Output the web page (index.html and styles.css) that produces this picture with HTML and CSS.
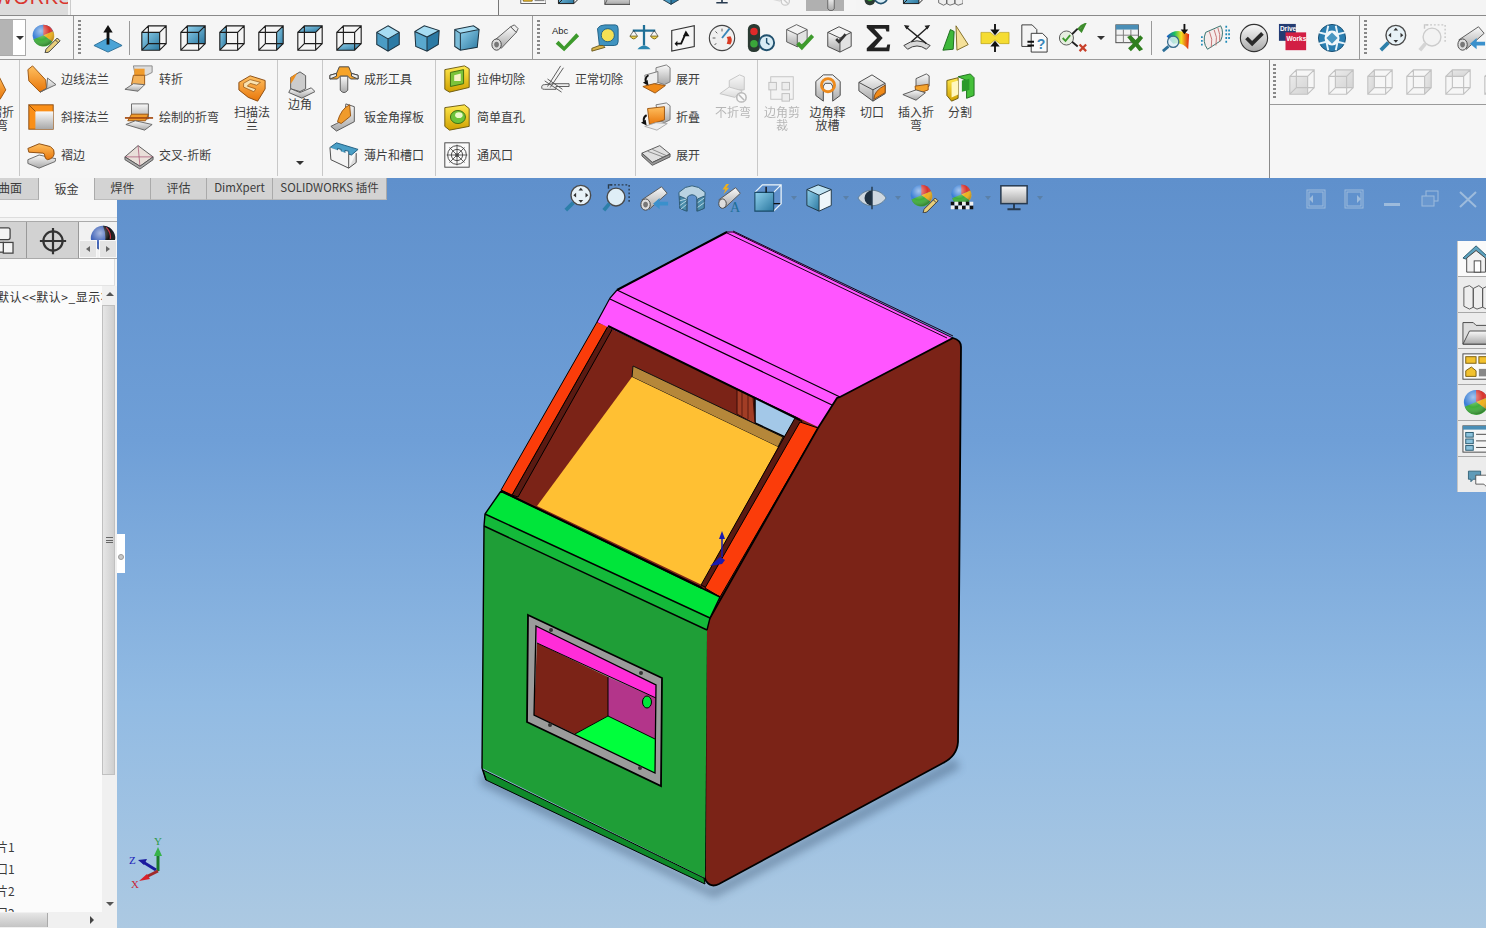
FILE: index.html
```html
<!DOCTYPE html>
<html lang="zh-CN">
<head>
<meta charset="utf-8">
<title>SOLIDWORKS</title>
<link rel="stylesheet" href="styles.css">
</head>
<body>
<svg class="defs" aria-hidden="true">
<defs>
<linearGradient id="gBlue" x1="0" y1="0" x2="1" y2="1"><stop offset="0" stop-color="#8fd0ec"/><stop offset="1" stop-color="#2a779f"/></linearGradient>
<linearGradient id="gOrange" x1="0" y1="0" x2="0" y2="1"><stop offset="0" stop-color="#ffc060"/><stop offset="1" stop-color="#e8760a"/></linearGradient>
<linearGradient id="gGray" x1="0" y1="0" x2="0" y2="1"><stop offset="0" stop-color="#fafafa"/><stop offset="1" stop-color="#a8a8a8"/></linearGradient>
<linearGradient id="gYellow" x1="0" y1="0" x2="0" y2="1"><stop offset="0" stop-color="#ffe84d"/><stop offset="1" stop-color="#cfa000"/></linearGradient>
<linearGradient id="gRain" x1="0" y1="0" x2="1" y2="0"><stop offset="0" stop-color="#1a4fd0"/><stop offset=".35" stop-color="#19c060"/><stop offset=".65" stop-color="#f4e020"/><stop offset="1" stop-color="#e02010"/></linearGradient>
<radialGradient id="gShine" cx=".38" cy=".3" r=".75"><stop offset="0" stop-color="#fff" stop-opacity=".55"/><stop offset=".55" stop-color="#fff" stop-opacity="0"/><stop offset="1" stop-color="#000" stop-opacity=".35"/></radialGradient>
<linearGradient id="gBg" x1="0" y1="0" x2="0" y2="1"><stop offset="0" stop-color="#5f90cc"/><stop offset=".35" stop-color="#6f9fd7"/><stop offset=".7" stop-color="#92bbe3"/><stop offset="1" stop-color="#acc9e2"/></linearGradient>
<filter id="blur" x="-20%" y="-20%" width="140%" height="140%"><feGaussianBlur stdDeviation="4"/></filter>

<symbol id="wire" viewBox="0 0 32 32"><path d="M3 10h19v19H3zM10 3h19v19H10zM3 10l7-7M22 10l7-7M22 29l7-7M3 29l7-7" fill="none" stroke="#1c1c1c" stroke-width="1.2"/></symbol>
<symbol id="c-front" viewBox="0 0 32 32"><rect x="3" y="10" width="19" height="19" fill="url(#gBlue)"/><use href="#wire"/></symbol>
<symbol id="c-back" viewBox="0 0 32 32"><rect x="10" y="3" width="19" height="19" fill="url(#gBlue)"/><use href="#wire"/></symbol>
<symbol id="c-left" viewBox="0 0 32 32"><path d="M3 10l7-7v19l-7 7z" fill="url(#gBlue)"/><use href="#wire"/></symbol>
<symbol id="c-right" viewBox="0 0 32 32"><path d="M22 10l7-7v19l-7 7z" fill="url(#gBlue)"/><use href="#wire"/></symbol>
<symbol id="c-top" viewBox="0 0 32 32"><path d="M3 10l7-7h19l-7 7z" fill="url(#gBlue)"/><use href="#wire"/></symbol>
<symbol id="c-bottom" viewBox="0 0 32 32"><path d="M3 29l7-7h19l-7 7z" fill="url(#gBlue)"/><use href="#wire"/></symbol>
<symbol id="c-iso" viewBox="0 0 32 32"><path d="M16 3l12 7-12 7-12-7z" fill="#a6dcf2"/><path d="M4 10l12 7v13L4 23z" fill="#4b9cc4"/><path d="M28 10L16 17v13l12-7z" fill="#2c7aa4"/><path d="M16 3l12 7v13l-12 7-12-7V10zM4 10l12 7 12-7M16 17v13" fill="none" stroke="#1d3340" stroke-width="1.1"/></symbol>
<symbol id="c-dim" viewBox="0 0 32 32"><path d="M13 3l16 5-13 7L3 9z" fill="#a6dcf2"/><path d="M3 9l13 6v15L4 25z" fill="#5aa8cd"/><path d="M29 8L16 15v15l12-7z" fill="#2c7aa4"/><path d="M13 3l16 5-1 15-12 7-12-5-1-16zM3 9l13 6 13-7M16 15v15" fill="none" stroke="#1d3340" stroke-width="1.1"/></symbol>
<symbol id="c-tri" viewBox="0 0 32 32"><path d="M4 7l20-4 6 4-20 4z" fill="#a6dcf2"/><path d="M4 7l6 4v18l-6-4z" fill="#7bbcd8"/><path d="M10 11l20-4-2 19-18 3z" fill="url(#gBlue)"/><path d="M4 7l20-4 6 4-2 19-18 3-6-4zM4 7l6 4 20-4M10 11v18" fill="none" stroke="#1d3340" stroke-width="1.1"/></symbol>

<symbol id="ball" viewBox="0 0 32 32"><circle cx="15" cy="15" r="13" fill="#3a7fd6"/><path d="M15 15V2a13 13 0 0 1 12 8z" fill="#d8342c"/><path d="M15 15l12-5a13 13 0 0 1-1 13z" fill="#f0b01a"/><path d="M15 15l11 8a13 13 0 0 1-23-3z" fill="#3fae3a"/><circle cx="15" cy="15" r="13" fill="url(#gShine)"/></symbol>
<symbol id="ball-dark" viewBox="0 0 32 32"><circle cx="16" cy="16" r="15" fill="#3f62b8"/><path d="M16 1a15 15 0 0 1 0 30q6-15 0-30z" fill="#111"/><path d="M20 3q6 6 5 14" fill="none" stroke="#c8283a" stroke-width="1.500"/><circle cx="16" cy="16" r="15" fill="url(#gShine)"/></symbol>
<symbol id="ball-pen" viewBox="0 0 32 32"><use href="#ball" width="28" height="28"/><path d="M28 16l3 3-12 12-4 1 1-4z" fill="#e9cf7a" stroke="#3b3b3b"/><path d="M26 18l3 3" stroke="#3b3b3b"/></symbol>
<symbol id="ball-check" viewBox="0 0 32 32"><use href="#ball" x="3" width="26" height="26"/><g fill="#111"><rect x="4" y="20" width="4" height="4"/><rect x="12" y="20" width="4" height="4"/><rect x="20" y="20" width="4" height="4"/><rect x="8" y="24" width="4" height="4"/><rect x="16" y="24" width="4" height="4"/><rect x="24" y="24" width="4" height="4"/></g><rect x="4" y="24" width="4" height="4" fill="#eee"/><rect x="12" y="24" width="4" height="4" fill="#eee"/><rect x="20" y="24" width="4" height="4" fill="#eee"/><rect x="8" y="20" width="4" height="4" fill="#eee"/><rect x="16" y="20" width="4" height="4" fill="#eee"/><rect x="24" y="20" width="4" height="4" fill="#eee"/></symbol>
<symbol id="normal" viewBox="0 0 32 32"><path d="M1 24l15-8 15 8-15 7z" fill="#4aa3d6" stroke="#2d6f97"/><path d="M16 23V8" stroke="#111" stroke-width="3"/><path d="M16 2l5 8H11z" fill="#111"/></symbol>
<symbol id="abc" viewBox="0 0 32 32"><text x="1" y="12" class="svg-abc">Abc</text><path d="M8 19l6 6L27 11l3 3-16 16-9-8z" fill="#3d9a2c"/></symbol>
<symbol id="tape" viewBox="0 0 32 32"><path d="M8 6q2-4 8-4h11q3 0 3 4v14q0 4-4 4H10z" fill="#3f93c0" stroke="#1f5f83"/><circle cx="19" cy="13" r="7" fill="#f4e055" stroke="#1f5f83"/><path d="M10 24l-8 3v3l14-4-2-2z" fill="#d9b44a" stroke="#6b5a1f"/></symbol>
<symbol id="scale" viewBox="0 0 32 32"><path d="M16 2v22M4 8h24" stroke="#1f6f96" stroke-width="2.4"/><path d="M9 28q7-8 14 0z" fill="#2a86b0"/><path d="M1 14q4 6 8 0z" fill="#f1d24a" stroke="#7a6a1c"/><path d="M23 14q4 6 8 0z" fill="#f1d24a" stroke="#7a6a1c"/><path d="M5 8l-4 6M5 8l4 6M27 8l-4 6M27 8l4 6" stroke="#333" stroke-width=".7"/></symbol>
<symbol id="sk-arrow" viewBox="0 0 32 32"><path d="M4 8l24-5v22L4 30z" fill="#f5f5f5" stroke="#333" stroke-width="1.2"/><path d="M9 22h5l4-9" fill="none" stroke="#111" stroke-width="2"/><path d="M19 8l4 6-7 0z" fill="#111"/><path d="M10 19l-3 3 3 3z" fill="#111"/></symbol>
<symbol id="gauge" viewBox="0 0 32 32"><circle cx="16" cy="16" r="13.5" fill="#f0f0f0" stroke="#444" stroke-width="1.2"/><path d="M16 16l8-10" stroke="#3a86b8" stroke-width="2"/><path d="M25 14q3 4 0 9l-4-1q2-4 0-7z" fill="#d83a22"/><path d="M6 16h3M16 6v3M9 9l2 2M8 23l2-1" stroke="#555"/></symbol>
<symbol id="traffic" viewBox="0 0 32 32"><rect x="2" y="1" width="13" height="30" rx="6" fill="#2a3a32"/><circle cx="8.500" cy="9" r="4" fill="#e02a2a"/><circle cx="8.500" cy="22" r="4" fill="#3aa63a"/><circle cx="22" cy="21" r="8" fill="#d8ecf5" stroke="#21516e" stroke-width="2"/><path d="M22 16v5l3 2" fill="none" stroke="#21516e" stroke-width="1.5"/></symbol>
<symbol id="c-gray" viewBox="0 0 32 32"><path d="M14 2l13 6-12 6L2 8z" fill="#f4f4f4"/><path d="M2 8l13 6v15L2 23z" fill="url(#gGray)"/><path d="M27 8l-12 6v15l12-6z" fill="#e2e2e2"/><path d="M14 2l13 6v15l-12 6-13-6V8zM2 8l13 6 12-6M15 14v15" fill="none" stroke="#444" stroke-width="1"/></symbol>
<symbol id="cube-ok" viewBox="0 0 32 32"><use href="#c-gray" width="28" height="28"/><path d="M12 23l6 6 13-14-3-3-10 11-3-3z" fill="#3d9a2c"/></symbol>
<symbol id="cube-dark" viewBox="0 0 32 32"><use href="#c-gray" x="2" y="2"/><path d="M12 18l4 4 8-9-2-2-6 7-2-2z" fill="#333"/></symbol>
<symbol id="sigma" viewBox="0 0 32 32"><path d="M4 2h24v7h-3l-1-3H12l9 10-9 10h13l1-3h3l-1 7H4v-3l11-11L4 5z" fill="#222"/></symbol>
<symbol id="curves" viewBox="0 0 32 32"><path d="M2 24q14-10 28 0l-4 4q-10-7-20 0z" fill="#d8d8d8" stroke="#333"/><path d="M4 4l22 18M28 4L10 20" stroke="#222" stroke-width="1.6"/><path d="M2 2l6 1-3 4zM30 2l-6 1 3 4z" fill="#222"/></symbol>
<symbol id="mirror" viewBox="0 0 32 32"><path d="M2 29l8-22 4 2-1 19z" fill="#3eb83a" stroke="#1b6a1b"/><path d="M16 3l13 20-12 6z" fill="#f5e19a" stroke="#7d6a22"/></symbol>
<symbol id="interfere" viewBox="0 0 32 32"><path d="M1 10h10l5 4 5-4h10v12H21l-5-4-5 4H1z" fill="#f5dc32" stroke="#a88f00" stroke-width=".6"/><path d="M16 1v10M16 31V21" stroke="#111" stroke-width="2"/><path d="M11 7l5 6 5-6zM11 25l5-6 5 6z" fill="#111"/></symbol>
<symbol id="compare" viewBox="0 0 32 32"><path d="M3 2h11l5 5v18H3z" fill="#f4f4f4" stroke="#333"/><path d="M13 11h12l5 5v15H13z" fill="#fafafa" stroke="#333"/><path d="M9 20h7M9 24h7" stroke="#111" stroke-width="2"/><text x="19" y="28" class="svg-q">?</text></symbol>
<symbol id="checkx" viewBox="0 0 32 32"><circle cx="9" cy="16" r="7.500" fill="#e6eee0" stroke="#555"/><path d="M5 16l3 3 5-6" fill="none" stroke="#3d9a2c" stroke-width="2"/><path d="M15 12l6-6M15 20l6 5" stroke="#222" stroke-width="2"/><path d="M22 6l3-3 4-2-4 8zM24 7l3-3" fill="none" stroke="#3d8c2c" stroke-width="2"/><path d="M23 23l7 7M30 23l-7 7" stroke="#c8402a" stroke-width="2.400"/></symbol>
<symbol id="table-x" viewBox="0 0 32 32"><rect x="2" y="2" width="24" height="19" fill="#f2f2f2" stroke="#444"/><rect x="2" y="2" width="24" height="5" fill="#4a8eb6"/><path d="M2 13h24M10 7v14M18 7v14" stroke="#777"/><path d="M14 15l4-2 5 5 5-5 3 3-5 6 5 6-4 2-4-5-5 5-3-3 5-5z" fill="#2f7f1e"/></symbol>
<symbol id="analyze" viewBox="0 0 32 32"><path d="M6 14q10-10 24-2l-1 16q-6-8-16-6z" fill="url(#gRain)"/><circle cx="13" cy="20" r="6" fill="#dff0f8" fill-opacity=".8" stroke="#3a6c8c" stroke-width="1.400"/><path d="M8 25l-6 5" stroke="#2d6f97" stroke-width="3"/><path d="M25 1v7" stroke="#111" stroke-width="2"/><path d="M21 7h8l-4 5z" fill="#111"/></symbol>
<symbol id="wave" viewBox="0 0 32 32"><path d="M6 10L22 3q4 7 0 16L8 28q-6-8-2-18z" fill="#f5eceb" stroke="#2f6f6a"/><path d="M10 9q4 8 2 17M15 7q4 8 2 17M19 5q3 7 2 15" fill="none" stroke="#c47070"/><path d="M28 3v18M31 7v10M2 14v10" stroke="#1c8ab8" stroke-dasharray="2 2" stroke-width="1.800"/></symbol>
<symbol id="roundcheck" viewBox="0 0 32 32"><circle cx="16" cy="16" r="14.500" fill="url(#gGray)" stroke="#333" stroke-width="1.200"/><path d="M8 16l6 6L25 11" fill="none" stroke="#2a2a2a" stroke-width="4"/></symbol>
<symbol id="drive" viewBox="0 0 32 32"><rect x="1" y="1" width="18" height="18" fill="#243c72"/><rect x="8" y="10" width="22" height="19" fill="#d21f44"/><text x="2" y="9" class="svg-drive">Drive</text><text x="9" y="19" class="svg-drive">Works</text></symbol>
<symbol id="ring" viewBox="0 0 32 32"><circle cx="16" cy="16" r="14.500" fill="#2b7eb0" stroke="#174d70"/><circle cx="16" cy="16" r="8" fill="#f4f8fa"/><path d="M2 10l8 2 2-9M30 10l-8 2-2-9M2 22l8-2 2 9M30 22l-8-2-2 9" fill="none" stroke="#e8f4fa" stroke-width="2"/><path d="M10 16l6-6 6 6-6 6z" fill="#4a97c2"/></symbol>
<symbol id="zoom-fit" viewBox="0 0 32 32"><circle cx="19" cy="13" r="10.500" fill="#e8f2f7" stroke="#4a4a4a" stroke-width="1.500"/><path d="M11 21L3 29" stroke="#2d7fa9" stroke-width="4"/><path d="M19 5l2.500 3h-5zM19 21l-2.500-3h5zM11 13l3-2.500v5zM27 13l-3 2.500v-5z" fill="#333"/></symbol>
<symbol id="zoom-box" viewBox="0 0 32 32"><circle cx="16" cy="15" r="9.500" fill="#dfeef6" stroke="#4a4a4a" stroke-width="1.500"/><path d="M9 22L3 29" stroke="#2d7fa9" stroke-width="4"/><path d="M10 2h20v20" fill="none" stroke="#2a3a4a" stroke-dasharray="2 2" stroke-width="1.500"/><path d="M8 6V2h4" fill="none" stroke="#2a3a4a" stroke-width="1.500"/></symbol>
<symbol id="scope-plain" viewBox="0 0 32 32"><path d="M3 20L22 4l6 6-16 17z" fill="url(#gGray)" stroke="#555"/><path d="M22 4l4-2 4 4-2 4z" fill="#eee" stroke="#555"/><ellipse cx="7" cy="23" rx="5" ry="6" fill="#ddd" stroke="#444"/><ellipse cx="7" cy="23" rx="2.500" ry="3" fill="#777"/></symbol>
<symbol id="scope" viewBox="0 0 32 32"><path d="M3 18L24 4l6 7-19 17z" fill="url(#gGray)" stroke="#555"/><ellipse cx="7" cy="23" rx="5" ry="6" fill="#ddd" stroke="#444"/><ellipse cx="7" cy="23" rx="2.500" ry="3" fill="#777"/><path d="M31 20H22v-4l-7 6 7 6v-4h9z" fill="#3a90cc"/></symbol>
<symbol id="section" viewBox="0 0 32 32"><path d="M2 10q14-14 28 0l-1 17-8 3V15q-5-5-10 0v15l-8-3z" fill="#b9d3e2" stroke="#2c5a75"/><path d="M3 14l7 3v13l-7-3zM22 17l7-3v13l-7 3z" fill="#4a8dab" stroke="#2c5a75"/><path d="M3 19l7-2M3 24l7-5M4 28l6-5M22 21l7-5M22 26l7-5" stroke="#d8ecf5" stroke-width=".8"/></symbol>
<symbol id="scope-a" viewBox="0 0 32 32"><path d="M4 18L22 5l5 6-16 15z" fill="url(#gGray)" stroke="#555"/><ellipse cx="8" cy="22" rx="4" ry="5" fill="#ddd" stroke="#444"/><path d="M12 1l-4 6h3l-2 5 6-7h-3l3-4z" fill="#f0b01a"/><text x="16" y="31" class="svg-a">A</text></symbol>
<symbol id="view-orient" viewBox="0 0 32 32"><path d="M2 10h20v20H2z" fill="url(#gBlue)"/><path d="M2 10l8-8h20v20l-8 8M22 10l8-8" fill="none" stroke="#eef6fa" stroke-width="1.300"/><path d="M2 10h20v20H2z" fill="none" stroke="#194a68" stroke-width="1.200"/><path d="M14 4v6M22 22h7" stroke="#111" stroke-width="1.500"/></symbol>
<symbol id="display-cube" viewBox="0 0 32 32"><path d="M14 2l14 5-13 6L2 7z" fill="#bfe3f3"/><path d="M2 7l13 6v17L2 24z" fill="url(#gBlue)"/><path d="M28 7l-13 6v17l13-6z" fill="#eef6fa"/><path d="M14 2l14 5v17l-13 6-13-6V7zM2 7l13 6 13-6M15 13v17" fill="none" stroke="#1d3340"/></symbol>
<symbol id="eye" viewBox="0 0 32 32"><path d="M1 16C8 5 24 5 31 16 24 27 8 27 1 16z" fill="#cfd8e0" stroke="#5f7d94"/><path d="M16 8a8 8 0 0 0 0 16z" fill="#1e3040"/><path d="M16 4v24" stroke="#23384a" stroke-width="1.500"/></symbol>
<symbol id="monitor" viewBox="0 0 32 32"><rect x="2" y="3" width="28" height="19" fill="url(#gGray)" stroke="#273a4f" stroke-width="1.600"/><path d="M16 22v5M9 28h14" stroke="#273a4f" stroke-width="2"/></symbol>
<symbol id="triad-pin" viewBox="0 0 32 32"><circle cx="16" cy="16" r="11" fill="none" stroke="#333" stroke-width="2.500"/><path d="M16 1v30M1 16h30" stroke="#333" stroke-width="2.500"/></symbol>
<symbol id="t-config" viewBox="0 0 27 37"><rect x="-8" y="6" width="18" height="12" rx="2" fill="#f4f4f4" stroke="#444" stroke-width="1.300"/><rect x="3" y="21" width="10" height="11" fill="#f4f4f4" stroke="#444" stroke-width="1.300"/><rect x="-6" y="21" width="9" height="10" fill="#f4f4f4" stroke="#444" stroke-width="1.300"/></symbol>

<symbol id="r-first" viewBox="0 0 32 32"><path d="M-4 12L12 2l8 16-6 10-14 0z" fill="url(#gOrange)" stroke="#9a5410"/></symbol>
<symbol id="r-edge" viewBox="0 0 32 32"><path d="M2 6l5-4 14 15 1 9-7 4L3 18z" fill="url(#gOrange)" stroke="#9a5410"/><path d="M15 30l17-8-9-7-1 11z" fill="url(#gGray)" stroke="#666"/></symbol>
<symbol id="r-jog" viewBox="0 0 32 32"><path d="M10 2h20v7l-6 3H12z" fill="#ddd" stroke="#888"/><path d="M11 5h11v7H11z" fill="#f09b2c"/><path d="M10 12h12v10H8z" fill="#f4b25a" stroke="#9a5410"/><path d="M1 27l9-6 12 1-7 7z" fill="url(#gGray)" stroke="#666"/></symbol>
<symbol id="r-swept" viewBox="0 0 32 32"><path d="M2 10L14 3l16 5v9l-8 13-10-4-10-8z" fill="url(#gOrange)" stroke="#8a4b10"/><path d="M7 11l7-4 11 3-4 3-7-2-3 3 9 3-2 3-11-5z" fill="#f9e2b0" stroke="#8a4b10" stroke-width=".7"/></symbol>
<symbol id="r-corner" viewBox="0 0 32 32"><path d="M6 8l10-6 6 4v14l-6 3-10-3z" fill="#ccc" stroke="#555"/><path d="M6 15V8l7-5q-2 5-7 12z" fill="#ee8f1e"/><path d="M6 20l10 4 12-5 4 4-14 7L4 24z" fill="url(#gGray)" stroke="#555"/></symbol>
<symbol id="r-form" viewBox="0 0 32 32"><path d="M1 12l7-2 3-7h10l3 7 7 2v4h-8l-3-3h-8l-3 3H1z" fill="#f6a429" stroke="#444"/><path d="M1 12l7-2v3l-7 3zM31 12l-7-2v3l7 3z" fill="#eee" stroke="#444"/><path d="M12 13h8v15q-4 5-8 0z" fill="url(#gGray)" stroke="#555"/></symbol>
<symbol id="r-miter" viewBox="0 0 32 32"><rect x="3" y="3" width="26" height="26" fill="#fa8f18" stroke="#8a4b10"/><path d="M10 10h19v19H10z" fill="url(#gGray)"/><path d="M3 3l7 7" stroke="#8a4b10"/></symbol>
<symbol id="r-sketch" viewBox="0 0 32 32"><path d="M8 2h18v16H8z" fill="url(#gGray)" stroke="#666"/><path d="M8 13l18 0-3 7H4z" fill="#f09b2c" stroke="#9a5410"/><path d="M1 17h30" stroke="#a44a10" stroke-width="1.800"/><path d="M2 24l10-4 18 4-8 6z" fill="url(#gGray)" stroke="#666"/></symbol>
<symbol id="r-gusset" viewBox="0 0 32 32"><path d="M18 2l9 3v16L8 31l-6-5 6-3 8-4z" fill="url(#gGray)" stroke="#555"/><path d="M9 21q4-14 13-18l1 12-10 8z" fill="#f09b2c" stroke="#9a5410"/></symbol>
<symbol id="r-hem" viewBox="0 0 32 32"><path d="M2 21l12-5 18 4-1 3-17 7L2 25z" fill="url(#gGray)" stroke="#666"/><path d="M2 9l12-5 12 3q5 3 4 8t-7 6q-3-1-3-4t-2-3L3 13z" fill="url(#gOrange)" stroke="#8a4b10"/></symbol>
<symbol id="r-cross" viewBox="0 0 32 32"><path d="M1 18L15 6l16 12-14 10z" fill="#e9dfd9" stroke="#555"/><path d="M1 18h30M15 6l2 22" stroke="#a57" stroke-width=".8"/><path d="M1 18l16 10 14-10v3L17 31 1 21z" fill="#aaa" stroke="#555"/></symbol>
<symbol id="r-tab" viewBox="0 0 32 32"><path d="M1 8l7-5 23 7-7 6-3-1v-3l-4-1v3l-4-1v-3l-4-1v3z" fill="#4a9fc6" stroke="#1d5d80"/><path d="M1 8l1 13 19 9V15" fill="#f4f4f4" stroke="#444"/><path d="M21 30l8-6V14" fill="#ddd" stroke="#444"/></symbol>
<symbol id="r-cut" viewBox="0 0 32 32"><path d="M3 6l21-4 5 3v20l-21 5-5-3z" fill="url(#gYellow)" stroke="#6c5a10"/><path d="M9 9l14-3v15l-14 3z" fill="#7bc33a" stroke="#3a6c10"/><path d="M13 12l7-2v8h-7z" fill="#f8f2c8"/></symbol>
<symbol id="r-hole" viewBox="0 0 32 32"><path d="M3 6l21-3 5 4v19l-21 4-5-4z" fill="url(#gYellow)" stroke="#6c5a10"/><ellipse cx="17" cy="16" rx="8" ry="7" fill="#6cc33a" stroke="#3a6c10"/><ellipse cx="18" cy="14" rx="4" ry="3" fill="#eaf7c8"/></symbol>
<symbol id="r-vent" viewBox="0 0 32 32"><rect x="3" y="3" width="26" height="26" fill="#fafafa" stroke="#444"/><circle cx="16" cy="16" r="10" fill="none" stroke="#444"/><circle cx="16" cy="16" r="6" fill="none" stroke="#444"/><circle cx="16" cy="16" r="2" fill="#444"/><path d="M16 5v22M5 16h22M8 8l16 16M24 8L8 24" stroke="#444" stroke-width=".9"/></symbol>
<symbol id="r-normal" viewBox="0 0 32 32"><path d="M2 26q-1-4 3-4l10-1 16 0v3l-14 0v3H5q-3 0-3-1z" fill="#eee" stroke="#555"/><path d="M8 24L22 2M11 25L25 4M5 18l18 12M8 16l16 11" stroke="#555" stroke-width="1"/></symbol>
<symbol id="r-unfold" viewBox="0 0 32 32"><path d="M16 4l11-3 4 3v15l-6 3-9-3z" fill="url(#gGray)" stroke="#777"/><path d="M4 12l14-4v12L6 24z" fill="#eee" stroke="#777"/><path d="M2 24l12-3 12 2-11 8z" fill="#f08a18" stroke="#9a5410"/><path d="M8 12q-5 3-2 9" fill="none" stroke="#111" stroke-width="2"/><path d="M2 20l6 3-1-6z" fill="#111"/></symbol>
<symbol id="r-fold" viewBox="0 0 32 32"><path d="M16 3l11-2 4 3v15l-6 3-6-2z" fill="url(#gGray)" stroke="#777"/><path d="M7 7l18-2v14L9 24z" fill="url(#gOrange)" stroke="#9a5410"/><path d="M4 26l12-4 12 1-11 7z" fill="#eee" stroke="#aaa"/><path d="M6 14q-5 3-2 9" fill="none" stroke="#111" stroke-width="2"/><path d="M0 22l6 3-1-6z" fill="#111"/></symbol>
<symbol id="r-flat" viewBox="0 0 32 32"><path d="M1 14l19-8 11 9-19 9z" fill="#e0e0e0" stroke="#555"/><path d="M7 12l19 7M12 10l18 8" stroke="#888"/><path d="M1 14v3l11 10 19-9v-3l-19 9z" fill="#999" stroke="#555"/></symbol>
<symbol id="r-nobend" viewBox="0 0 32 32"><path d="M12 8l11-6 5 2v14l-16 0z" fill="url(#gGray)" stroke="#666"/><path d="M2 22l10-7 14 4-8 7z" fill="url(#gGray)" stroke="#666"/><circle cx="25" cy="26" r="5" fill="#fff" stroke="#444" stroke-width="1.600"/><path d="M22 23l6 6" stroke="#444" stroke-width="1.600"/></symbol>
<symbol id="r-trim" viewBox="0 0 32 32"><rect x="4" y="4" width="24" height="24" fill="#eee" stroke="#666"/><rect x="2" y="10" width="8" height="8" fill="#ddd" stroke="#555"/><rect x="16" y="10" width="8" height="8" fill="#ddd" stroke="#555"/><rect x="16" y="22" width="8" height="8" fill="#ddd" stroke="#555"/></symbol>
<symbol id="r-relief" viewBox="0 0 32 32"><path d="M3 9l8-7h10l8 7v15l-8 6V14l-2-3h-6l-2 3v16l-8-6z" fill="url(#gGray)" stroke="#444"/><circle cx="16" cy="13" r="7" fill="none" stroke="#ed8a1c" stroke-width="3"/></symbol>
<symbol id="r-notch" viewBox="0 0 32 32"><path d="M2 10L16 2l14 9v11l-13 8L2 19z" fill="url(#gGray)" stroke="#444"/><path d="M2 10l15 8 13-7M17 18v12" fill="none" stroke="#444"/><path d="M18 28q0-9 12-15v8z" fill="#f08a18" stroke="#8a4b10"/></symbol>
<symbol id="r-insert" viewBox="0 0 32 32"><path d="M16 6l11-5 3 2v11l-14 6z" fill="url(#gGray)" stroke="#555"/><path d="M15 14l14-2v6l-13 5z" fill="#f4a32c" stroke="#9a5410"/><path d="M2 23l14-5 10 3-10 8z" fill="url(#gGray)" stroke="#555"/></symbol>
<symbol id="r-rip" viewBox="0 0 32 32"><path d="M2 8l12-3v22l-7 3-5-6z" fill="url(#gYellow)" stroke="#6c5a10"/><path d="M14 4l13-3 4 4v19l-8 3V8z" fill="#45c03a" stroke="#1c6d1c"/><path d="M7 10l7-2v15l-7 3z" fill="#fff7bf"/><path d="M18 8l8-2v12l-8 2z" fill="#2a9a2a"/></symbol>

<symbol id="t-home" viewBox="0 0 32 32"><path d="M1 15L15 2l14 13-3 1L15 7 4 16z" fill="#5fa3bf" stroke="#25566c"/><path d="M5 15v15h20V15L15 7z" fill="#f2f2f2" stroke="#444"/><rect x="13" y="18" width="7" height="12" fill="#fff" stroke="#444"/></symbol>
<symbol id="t-books" viewBox="0 0 32 32"><path d="M2 8l6-2 4 3v20l-4 2-6-3zM12 9l6-3 4 3v20l-6 2-4-2zM22 9l6-3 4 3v20l-6 2-4-2z" fill="#eee" stroke="#555"/></symbol>
<symbol id="t-folder" viewBox="0 0 32 32"><path d="M1 7h11l3 3h17v20H1z" fill="#ddd" stroke="#444"/><path d="M1 30l7-14h24v14z" fill="url(#gGray)" stroke="#444"/></symbol>
<symbol id="t-parts" viewBox="0 0 32 32"><rect x="1" y="2" width="31" height="27" fill="#fafafa" stroke="#444"/><rect x="4" y="5" width="11" height="7" fill="#f2c12e" stroke="#7a5e10"/><rect x="18" y="5" width="11" height="7" fill="#f2c12e" stroke="#7a5e10"/><path d="M4 26v-6l6-4 5 4v6z" fill="#f2c12e" stroke="#7a5e10"/><rect x="18" y="18" width="12" height="8" fill="#888"/></symbol>
<symbol id="t-list" viewBox="0 0 32 32"><rect x="1" y="2" width="31" height="28" fill="#f6f6f6" stroke="#444"/><rect x="1" y="2" width="31" height="4" fill="#4a8eb6"/><rect x="4" y="9" width="8" height="5" fill="#8bc2dc" stroke="#25566c"/><rect x="4" y="16" width="8" height="5" fill="#8bc2dc" stroke="#25566c"/><rect x="4" y="23" width="8" height="5" fill="#8bc2dc" stroke="#25566c"/><path d="M15 11h17M15 18h17M15 25h17" stroke="#444"/></symbol>
<symbol id="t-chat" viewBox="0 0 32 32"><path d="M3 10h15v10h-9l-3 3v-3H3z" fill="#5f9bb8" stroke="#25566c"/><path d="M12 15h18v11h-4v4l-4-4H12z" fill="#fafafa" stroke="#444"/></symbol>
</defs>
</svg>

<div class="app">
  <header class="top-strip">
    <div class="logo-box"><span class="logo-text">WORKS</span></div>
    <div class="title-field"></div>
    <div class="top-peek">
      <svg class="peek"><use href="#t-parts"/></svg>
      <svg class="peek pg10"><use href="#c-front"/></svg>
      <svg class="peek pg22"><use href="#t-folder"/></svg>
      <svg class="peek pg28"><use href="#c-iso"/></svg>
      <svg class="peek pg25"><use href="#monitor"/></svg>
      <svg class="peek pg30 ghost"><use href="#r-nobend"/></svg>
      <span class="peek-active pg15"><svg class="peek peek-in"><use href="#r-form"/></svg></span>
      <svg class="peek pg7"><use href="#traffic"/></svg>
      <svg class="peek pg12"><use href="#c-front"/></svg>
      <svg class="peek pg10"><use href="#t-books"/></svg>
    </div>
  </header>

  <div class="toolbar">
    <div class="combo"><span class="combo-fill"></span><span class="caret"></span></div>
    <div class="tool"><svg class="ico"><use href="#ball-pen"/></svg></div>
    <span class="sep-full m-l8"></span>
    <span class="grip g-a"></span>
    <div class="tool"><svg class="ico"><use href="#normal"/></svg></div>
    <span class="sep-thin m-l2 m-r4"></span>
    <div class="tool"><svg class="ico"><use href="#c-front"/></svg></div>
    <div class="tool"><svg class="ico"><use href="#c-back"/></svg></div>
    <div class="tool"><svg class="ico"><use href="#c-left"/></svg></div>
    <div class="tool"><svg class="ico"><use href="#c-right"/></svg></div>
    <div class="tool"><svg class="ico"><use href="#c-top"/></svg></div>
    <div class="tool"><svg class="ico"><use href="#c-bottom"/></svg></div>
    <div class="tool"><svg class="ico"><use href="#c-iso"/></svg></div>
    <div class="tool"><svg class="ico"><use href="#c-dim"/></svg></div>
    <div class="tool"><svg class="ico"><use href="#c-tri"/></svg></div>
    <div class="tool"><svg class="ico"><use href="#scope-plain"/></svg></div>
    <span class="sep-full m-l8"></span>
    <span class="grip g-b"></span>
    <div class="tool"><svg class="ico"><use href="#abc"/></svg></div>
    <div class="tool"><svg class="ico"><use href="#tape"/></svg></div>
    <div class="tool"><svg class="ico"><use href="#scale"/></svg></div>
    <div class="tool"><svg class="ico"><use href="#sk-arrow"/></svg></div>
    <div class="tool"><svg class="ico"><use href="#gauge"/></svg></div>
    <div class="tool"><svg class="ico"><use href="#traffic"/></svg></div>
    <div class="tool"><svg class="ico"><use href="#cube-ok"/></svg></div>
    <div class="tool"><svg class="ico"><use href="#cube-dark"/></svg></div>
    <div class="tool"><svg class="ico"><use href="#sigma"/></svg></div>
    <div class="tool"><svg class="ico"><use href="#curves"/></svg></div>
    <div class="tool"><svg class="ico"><use href="#mirror"/></svg></div>
    <div class="tool"><svg class="ico"><use href="#interfere"/></svg></div>
    <div class="tool"><svg class="ico"><use href="#compare"/></svg></div>
    <div class="tool"><svg class="ico"><use href="#checkx"/></svg></div>
    <div class="caret-cell"><span class="caret"></span></div>
    <div class="tool"><svg class="ico"><use href="#table-x"/></svg></div>
    <span class="sep-thin m-l3 m-r4"></span>
    <div class="tool"><svg class="ico"><use href="#analyze"/></svg></div>
    <div class="tool"><svg class="ico"><use href="#wave"/></svg></div>
    <div class="tool"><svg class="ico"><use href="#roundcheck"/></svg></div>
    <div class="tool"><svg class="ico"><use href="#drive"/></svg></div>
    <div class="tool"><svg class="ico"><use href="#ring"/></svg></div>
    <span class="sep-full m-l8"></span>
    <span class="grip g-b"></span>
    <div class="tool"><svg class="ico"><use href="#zoom-fit"/></svg></div>
    <div class="tool ghost"><svg class="ico"><use href="#zoom-box"/></svg></div>
    <div class="tool"><svg class="ico"><use href="#scope"/></svg></div>
  </div>

  <div class="ribbon">
    <section class="grp grp-a">
      <div class="big cut-left"><svg class="ico"><use href="#r-first"/></svg><span>褶折弯</span></div>
    </section>
    <section class="grp grp-b">
      <div class="col c98">
        <div class="item"><svg class="ico"><use href="#r-edge"/></svg><span>边线法兰</span></div>
        <div class="item"><svg class="ico"><use href="#r-miter"/></svg><span>斜接法兰</span></div>
        <div class="item"><svg class="ico"><use href="#r-hem"/></svg><span>褶边</span></div>
      </div>
      <div class="col c105">
        <div class="item"><svg class="ico"><use href="#r-jog"/></svg><span>转折</span></div>
        <div class="item"><svg class="ico"><use href="#r-sketch"/></svg><span>绘制的折弯</span></div>
        <div class="item"><svg class="ico"><use href="#r-cross"/></svg><span>交叉-折断</span></div>
      </div>
      <div class="big w46"><svg class="ico"><use href="#r-swept"/></svg><span>扫描法兰</span></div>
    </section>
    <section class="grp grp-c">
      <svg class="ico"><use href="#r-corner"/></svg>
      <span class="corner-label">边角</span>
      <span class="caret corner-caret"></span>
    </section>
    <section class="grp grp-d">
      <div class="col">
        <div class="item"><svg class="ico"><use href="#r-form"/></svg><span>成形工具</span></div>
        <div class="item"><svg class="ico"><use href="#r-gusset"/></svg><span>钣金角撑板</span></div>
        <div class="item"><svg class="ico"><use href="#r-tab"/></svg><span>薄片和槽口</span></div>
      </div>
    </section>
    <section class="grp grp-e">
      <div class="col c98">
        <div class="item"><svg class="ico"><use href="#r-cut"/></svg><span>拉伸切除</span></div>
        <div class="item"><svg class="ico"><use href="#r-hole"/></svg><span>简单直孔</span></div>
        <div class="item"><svg class="ico"><use href="#r-vent"/></svg><span>通风口</span></div>
      </div>
      <div class="col">
        <div class="item"><svg class="ico"><use href="#r-normal"/></svg><span>正常切除</span></div>
      </div>
    </section>
    <section class="grp grp-f">
      <div class="col c69">
        <div class="item"><svg class="ico"><use href="#r-unfold"/></svg><span>展开</span></div>
        <div class="item"><svg class="ico"><use href="#r-fold"/></svg><span>折叠</span></div>
        <div class="item"><svg class="ico"><use href="#r-flat"/></svg><span>展开</span></div>
      </div>
      <div class="big w46 disabled"><svg class="ico"><use href="#r-nobend"/></svg><span>不折弯</span></div>
    </section>
    <section class="grp grp-g">
      <div class="big w46 disabled"><svg class="ico"><use href="#r-trim"/></svg><span>边角剪裁</span></div>
      <div class="big w45"><svg class="ico"><use href="#r-relief"/></svg><span>边角释放槽</span></div>
      <div class="big w44"><svg class="ico"><use href="#r-notch"/></svg><span>切口</span></div>
      <div class="big w44"><svg class="ico"><use href="#r-insert"/></svg><span>插入折弯</span></div>
      <div class="big w44"><svg class="ico"><use href="#r-rip"/></svg><span>分割</span></div>
    </section>
    <section class="grp-h">
      <div class="ghost-row">
        <span class="grip g-c"></span>
        <div class="tool ghost"><svg class="ico"><use href="#c-front"/></svg></div>
        <div class="tool ghost"><svg class="ico"><use href="#c-back"/></svg></div>
        <div class="tool ghost"><svg class="ico"><use href="#c-left"/></svg></div>
        <div class="tool ghost"><svg class="ico"><use href="#c-right"/></svg></div>
        <div class="tool ghost"><svg class="ico"><use href="#c-top"/></svg></div>
        <div class="tool ghost"><svg class="ico"><use href="#c-bottom"/></svg></div>
      </div>
    </section>
  </div>

  <main class="stage">
    <svg class="canvas" viewBox="0 178 1486 750" preserveAspectRatio="none">
      <rect x="0" y="178" width="1486" height="750" fill="url(#gBg)"/>
      <polygon points="482,772 712,888 955,758 960,768 714,898 480,784" fill="#2d4560" opacity=".38" filter="url(#blur)"/>
      <!-- cabinet interior -->
      <polygon points="597,322 822,428 720,600 501,491" fill="#7b2317"/>
      <polygon points="755,397 797,417 785,437 755,423" fill="#a3c8e8" stroke="#000" stroke-width="1.500"/>
      <polygon points="737,388 753,397 755,424 737,414" fill="#a23d25" stroke="#3a0d08"/>
      <path d="M742 391v25M748 394v25" stroke="#5c1a10" stroke-width="1"/>
      <polygon points="633,366 783,437 778,447 632,377" fill="#b5873a" stroke="#111"/>
      <polygon points="632,377 778,447 702,585 537,506" fill="#ffc033"/>
      <polygon points="608,326 613,328 518,497 512,495" fill="#5a1a12" stroke="#000"/>
      <polygon points="795,418 802,421 707,588 701,585" fill="#5a1a12" stroke="#000"/>
      <polygon points="597,322 608,326 512,495 501,490" fill="#fb3c0a" stroke="#000"/>
      <polygon points="800,422 818,428 720,597 705,588" fill="#fb3c0a" stroke="#000"/>
      <!-- top panels -->
      <polygon points="727,232 733,231 953,338 840,397 617,290" fill="#ff55ff"/>
      <polygon points="617,290 840,397 832,404 822,426 818,427 597,322 610,298" fill="#ff55ff"/>
      <path d="M617 290L727 232h6L953 338M727 233L947 338M733 231L953 336" fill="none" stroke="#1a001a" stroke-width="1"/>
      <path d="M727 232L617 290" fill="none" stroke="#000" stroke-width="2"/>
      <path d="M617 290L840 397M610 299L832 405" fill="none" stroke="#000" stroke-width="1.200"/>
      <path d="M617 290L610 298L597 322" fill="none" stroke="#000" stroke-width="1.200"/>
      <path d="M608 326L800 420" fill="none" stroke="#000" stroke-width="2"/>
      <!-- brown side -->
      <path d="M953 338Q961 340 961 347L958 742Q957 756 943 763L719 884Q711 888 706 881Q704 878 705 870L706 630Q707 622 710 618L818 428L837 398L840 397Z" fill="#7b2317" stroke="#000" stroke-width="1.800"/>
      <!-- green front -->
      <polygon points="484,526 707,630 705,878 482,768" fill="#1f9e37"/>
      <polygon points="483,770 704,878 705,884 486,780" fill="#0f8a2a" stroke="#000" stroke-width="1"/>
      <polygon points="485,514 710,618 707,630 484,526" fill="#14b93a"/>
      <polygon points="501,491 720,597 710,618 485,514" fill="#00e53a"/>
      <path d="M501 491L720 597M501 491L485 514L484 526L482 768L486 780M485 514L710 618M484 526L707 630M720 597L710 618L707 630" fill="none" stroke="#000" stroke-width="1.400"/>
      <path d="M501 491L702 588" stroke="#000" stroke-width="2" fill="none"/>
      <!-- front window -->
      <polygon points="528,615 662,678 661,786 527,722" fill="#9b9b9b" stroke="#000" stroke-width="1.800"/>
      <polygon points="537,643 608,677 608,716 575,734 534,715" fill="#7b2317"/>
      <polygon points="608,677 656,698 655,739 608,716" fill="#b3358a"/>
      <polygon points="608,716 655,739 655,773 575,734" fill="#00ff3c"/>
      <polygon points="536,626 656,685 656,698 537,643" fill="#ff2dd8"/>
      <polygon points="536,626 656,685 655,773 534,715" fill="none" stroke="#000" stroke-width="1.300"/>
      <path d="M537 643L656 698M608 677V716M608 716L575 734M608 716L655 739" fill="none" stroke="#000" stroke-width="1"/>
      <ellipse cx="647" cy="702" rx="4.500" ry="6" fill="#00e53a" stroke="#000"/>
      <circle cx="551" cy="630" r="2" fill="#333"/><circle cx="641" cy="673" r="2" fill="#333"/><circle cx="550" cy="725" r="2" fill="#333"/><circle cx="640" cy="768" r="2" fill="#333"/>
      <!-- origin -->
      <path d="M722 537v20" stroke="#1a1ab0" stroke-width="1.500"/><path d="M722 531l3 8h-6z" fill="#1a1ab0"/><path d="M710 566l10-9 5 3-3 4z" fill="#1a1ab0"/>
      <!-- triad -->
      <path d="M158 871V851" stroke="#1d7a2a" stroke-width="3"/><path d="M158 847l4 9h-8z" fill="#37b34a"/>
      <path d="M156 870L143 862" stroke="#1a1a9e" stroke-width="3"/><path d="M138 860l9-1-3 6z" fill="#1a1a9e"/>
      <path d="M158 871L146 877" stroke="#a02a2a" stroke-width="3"/><path d="M139 881l8-7 3 5z" fill="#d8202a"/>
      <text x="154" y="845" class="axis ax-y">Y</text><text x="129" y="864" class="axis ax-z">Z</text><text x="131" y="888" class="axis ax-x">X</text>
    </svg>

    <nav class="tabs">
      <span class="tab t-first">曲面</span>
      <span class="tab t-active">钣金</span>
      <span class="tab t-56">焊件</span>
      <span class="tab t-56">评估</span>
      <span class="tab t-66">DimXpert</span>
      <span class="tab t-114">SOLIDWORKS 插件</span>
    </nav>

    <div class="hud">
      <svg class="hud-ico"><use href="#zoom-fit"/></svg>
      <svg class="hud-ico"><use href="#zoom-box"/></svg>
      <svg class="hud-ico"><use href="#scope"/></svg>
      <svg class="hud-ico"><use href="#section"/></svg>
      <svg class="hud-ico"><use href="#scope-a"/></svg>
      <svg class="hud-ico"><use href="#view-orient"/></svg>
      <span class="hud-caret"></span>
      <svg class="hud-ico"><use href="#display-cube"/></svg>
      <span class="hud-caret"></span>
      <svg class="hud-ico"><use href="#eye"/></svg>
      <span class="hud-caret"></span>
      <svg class="hud-ico"><use href="#ball-pen"/></svg>
      <svg class="hud-ico"><use href="#ball-check"/></svg>
      <span class="hud-caret"></span>
      <svg class="hud-ico"><use href="#monitor"/></svg>
      <span class="hud-caret"></span>
    </div>

    <div class="win-ctrl">
      <span class="wc"><svg viewBox="0 0 20 20"><rect x="1" y="1" width="18" height="18" class="wc-line"/><rect x="3" y="3" width="14" height="14" class="wc-line"/><path d="M7 6v8L3 10z" class="wc-fill"/></svg></span>
      <span class="wc"><svg viewBox="0 0 20 20"><rect x="1" y="1" width="18" height="18" class="wc-line"/><rect x="3" y="3" width="14" height="14" class="wc-line"/><path d="M13 6v8l4-4z" class="wc-fill"/></svg></span>
      <span class="wc"><svg viewBox="0 0 20 20"><rect x="2" y="14" width="16" height="3" class="wc-fill"/></svg></span>
      <span class="wc"><svg viewBox="0 0 20 20"><rect x="6" y="2" width="12" height="10" class="wc-line"/><rect x="2" y="7" width="12" height="10" class="wc-fill2"/></svg></span>
      <span class="wc"><svg viewBox="0 0 20 20"><path d="M2 3l16 15M18 3L2 18" class="wc-x"/></svg></span>
    </div>

    <aside class="taskpane">
      <div class="task t-on"><svg><use href="#t-home"/></svg></div>
      <div class="task"><svg><use href="#t-books"/></svg></div>
      <div class="task"><svg><use href="#t-folder"/></svg></div>
      <div class="task"><svg><use href="#t-parts"/></svg></div>
      <div class="task"><svg><use href="#ball"/></svg></div>
      <div class="task"><svg><use href="#t-list"/></svg></div>
      <div class="task"><svg class="chat"><use href="#t-chat"/></svg></div>
    </aside>

    <div class="work">
      <aside class="panel">
        <div class="panel-head"></div>
        <div class="panel-tabs">
          <div class="ptab p1"><svg class="ptab-ico"><use href="#t-config"/></svg></div>
          <div class="ptab p2"><svg class="target"><use href="#triad-pin"/></svg></div>
          <div class="ptab p3"><svg class="ptab-ball"><use href="#ball-dark"/></svg>
            <span class="scroll-btn sb-l"></span><span class="scroll-btn sb-r"></span>
          </div>
        </div>
        <div class="panel-field"></div>
        <div class="tree-wrap">
          <div class="tree">
            <div class="tree-root">默认&lt;&lt;默认&gt;_显示状态</div>
            <ul class="tree-list">
              <li>薄片1</li>
              <li>切口1</li>
              <li>薄片2</li>
              <li>切口2</li>
            </ul>
          </div>
          <div class="vscroll"><span class="v-up"></span><span class="v-thumb"></span><span class="v-down"></span></div>
        </div>
        <div class="hscroll"><span class="h-thumb"></span><span class="h-right"></span></div>
      </aside>
      <div class="splitter"><span class="split-dot"></span></div>
    </div>
  </main>
</div>
</body>
</html>
```
FILE: styles.css
```css
* { box-sizing: border-box; }
html, body { margin: 0; height: 100%; overflow: hidden; }
body { font: 12px/13px "Noto Sans CJK SC", "Noto Sans", sans-serif; color: #3c3c3c; background: #f5f5f5; }
.defs { position: absolute; width: 0; height: 0; }
.app { width: 1486px; height: 928px; display: flex; flex-direction: column; overflow: hidden; }

/* top strip */
.top-strip { height: 16px; flex: none; display: flex; background: #f4f4f4; border-bottom: 1px solid #8a8a8a; overflow: hidden; }
.logo-box { width: 68px; background: #dcdcdc; overflow: hidden; flex: none; }
.logo-text { display: block; margin: -13px 0 0 -6px; font: 20px/20px "Liberation Sans", sans-serif; letter-spacing: .6px; color: #d9352e; }
.title-field { width: 429px; margin-left: 2px; background: #f7f7f7; border-left: 1px solid #ccc; border-right: 1px solid #777; border-bottom: 1px solid #111; height: 16px; flex: none; }
.top-peek { display: flex; align-items: flex-start; margin-left: 21px; }
.peek { width: 26px; height: 26px; margin-top: -20px; flex: none; }
.peek-in { margin-top: -16px; }
.pg7 { margin-left: 7px; }
.pg10 { margin-left: 10px; }
.pg12 { margin-left: 12px; }
.pg15 { margin-left: 15px; }
.pg22 { margin-left: 22px; }
.pg25 { margin-left: 25px; }
.pg28 { margin-left: 28px; }
.pg30 { margin-left: 30px; }
.peek-active { display: block; width: 50px; height: 11px; background: linear-gradient(90deg, #b0b0b0 75%, #f5f5f5 75%); text-align: center; flex: none; overflow: hidden; }

/* toolbar */
.toolbar { height: 44px; flex: none; display: flex; align-items: center; background: #f5f5f5; border-bottom: 1px solid #9a9a9a; overflow: hidden; }
.tool { width: 39px; flex: none; display: flex; justify-content: center; }
.ico { width: 30px; height: 30px; flex: none; display: block; }
.ghost { filter: grayscale(1) opacity(.24); }
.combo { width: 26px; height: 37px; flex: none; display: flex; border: 1px solid #aaa; border-left: 0; background: #fff; align-items: center; }
.combo-fill { width: 13px; height: 100%; background: #b4b4b4; }
.caret { display: block; width: 0; height: 0; border: 4px solid transparent; border-top: 4px solid #333; border-bottom: 0; }
.combo .caret { margin-left: 3px; }
.caret-cell { width: 17px; flex: none; display: flex; justify-content: center; }
.sep-full { width: 1px; align-self: stretch; background: #9a9a9a; flex: none; }
.sep-thin { width: 1px; height: 34px; background: #999; flex: none; }
.m-l8 { margin-left: 8px; }
.m-l2 { margin-left: 2px; }
.m-l3 { margin-left: 3px; }
.m-r4 { margin-right: 4px; }
.grip { width: 3px; height: 36px; flex: none; background: repeating-linear-gradient(#888 0 2px, transparent 2px 4px); }
.g-a { margin: 0 7px 0 4px; }
.g-b { margin: 0 6px 0 4px; }
.g-c { margin: 0 6px 0 3px; }

/* ribbon */
.ribbon { height: 118px; flex: none; display: flex; background: #f6f6f6; overflow: hidden; }
.grp { position: relative; height: 116px; border-right: 1px solid #c8c8c8; display: flex; flex: none; margin-top: 0; }
.grp-a { width: 20px; overflow: hidden; }
.grp-b { width: 258px; padding-left: 6px; }
.grp-c { width: 45px; flex-direction: column; align-items: center; padding-top: 10px; }
.grp-d { width: 113px; padding-left: 6px; }
.grp-e { width: 200px; padding-left: 6px; }
.grp-f { width: 122px; padding-left: 5px; }
.grp-g { width: 512px; padding-left: 1px; border-right: 1px solid #8a8a8a; height: 118px; }
.grp-h { flex: 1; min-width: 0; }
.ghost-row { display: flex; align-items: center; height: 45px; border-bottom: 1px solid #9a9a9a; overflow: hidden; }
.col { display: flex; flex-direction: column; flex: none; }
.c98 { width: 98px; }
.c105 { width: 105px; }
.c69 { width: 69px; }
.item { height: 38px; display: flex; align-items: center; gap: 5px; white-space: nowrap; }
.item span { margin-bottom: 2px; }
.big { display: flex; flex-direction: column; align-items: center; padding-top: 13px; text-align: center; flex: none; }
.big span { margin-top: 2px; display: block; }
.w46 { width: 46px; }
.w45 { width: 45px; }
.w44 { width: 44px; }
.cut-left { width: 30px; margin-left: -13px; padding-top: 13px; }
.disabled { filter: grayscale(1) opacity(.35); }
.corner-label { margin-top: -3px; }
.corner-caret { margin-top: 51px; }

/* stage */
.stage { position: relative; flex: 1; min-height: 0; display: flex; flex-direction: column; }
.canvas { position: absolute; left: 0; top: 0; width: 1486px; height: 750px; display: block; }
.axis { font: 11px "Liberation Serif", serif; }
.ax-y { fill: #2f9a4a; }
.ax-z { fill: #1a1ab8; }
.ax-x { fill: #c8283a; }
.svg-abc { font: 10px "Liberation Sans", sans-serif; fill: #222; }
.svg-q { font: bold 15px "Liberation Sans", sans-serif; fill: #3a86b8; }
.svg-drive { font: bold 7px "Liberation Sans Narrow", "Liberation Sans", sans-serif; fill: #fff; }
.svg-a { font: 15px "Liberation Serif", serif; fill: #1f6f96; }

.tabs { position: relative; display: flex; height: 22px; flex: none; font-size: 11.500px; }
.tab { height: 22px; padding-bottom: 2px; display: flex; align-items: center; justify-content: center; background: #d3d3d3; border-right: 1px solid #aaa; border-bottom: 1px solid #bbb; white-space: nowrap; }
.t-first { width: 39px; justify-content: flex-start; text-indent: -2px; font-size: 12px; }
.t-active { width: 56px; background: #f5f5f5; border-bottom: 0; font-size: 12px; }
.t-56 { width: 56px; font-size: 12px; }
.t-66 { width: 66px; }
.t-114 { width: 114px; }

.hud { position: absolute; left: 559px; top: 5px; display: flex; align-items: center; height: 30px; }
.hud-ico { width: 38px; height: 30px; flex: none; }
.hud-caret { width: 14px; flex: none; display: flex; justify-content: center; }
.hud-caret::before { content: ""; border: 3px solid transparent; border-top: 4px solid #5a80a8; border-bottom: 0; }

.win-ctrl { position: absolute; left: 1297px; top: 10px; display: flex; }
.wc { width: 38px; height: 22px; display: flex; justify-content: center; align-items: center; }
.wc svg { width: 20px; height: 20px; }
.wc-line { fill: none; stroke: #9dbbdc; stroke-width: 1; }
.wc-fill { fill: #9dbbdc; }
.wc-fill2 { fill: #6a98cf; stroke: #9dbbdc; }
.wc-x { fill: none; stroke: #9dbbdc; stroke-width: 2; }

.taskpane { position: absolute; right: 0; top: 63px; width: 29px; height: 251px; background: #ebebeb; border-left: 1px solid #c5c5c5; overflow: hidden; }
.task { height: 36px; padding: 3px 0 0 4px; border-bottom: 1px solid #a8a8a8; background: #ececec; }
.task svg { width: 30px; height: 30px; display: block; }
.task svg.chat { width: 26px; height: 26px; margin-top: 3px; margin-left: 4px; }
.t-on { background: #fafafa; }

.work { position: relative; flex: 1; min-height: 0; display: flex; align-items: flex-start; }
.panel { width: 117px; height: 728px; background: #f6f6f6; display: flex; flex-direction: column; flex: none; }
.panel-head { height: 22px; flex: none; border-bottom: 1px solid #aaa; background: linear-gradient(#f8f8f8 0 17px, #ddd 17px 18px, #f4f4f4 18px); }
.panel-tabs { height: 37px; flex: none; display: flex; background: #d2d2d2; border-bottom: 1px solid #aaa; }
.ptab { height: 100%; border-right: 1px solid #999; display: flex; align-items: center; justify-content: center; flex: none; overflow: hidden; position: relative; }
.p1 { width: 27px; justify-content: flex-start; }
.p2 { width: 52px; }
.p3 { flex: 1; border-right: 0; background: #f2f2f2; align-items: flex-start; min-width: 0; overflow: visible; }
.ptab-ico { width: 27px; height: 36px; flex: none; }
.target { width: 28px; height: 28px; margin-top: 1px; }
.ptab-ball { width: 26px; height: 26px; position: absolute; left: 11px; top: 3px; }
.scroll-btn { position: absolute; top: 18px; width: 18px; height: 18px; background: #e3e3e3; border: 1px solid #f8f8f8; }
.sb-l { left: 0; }
.sb-r { left: 20px; }
.scroll-btn::after { content: ""; position: absolute; left: 6px; top: 5px; border: 3px solid transparent; }
.sb-l::after { border-right: 4px solid #666; border-left: 0; }
.sb-r::after { border-left: 4px solid #666; border-right: 0; }
.panel-field { height: 27px; flex: none; background: #fafafa; border-bottom: 1px solid #e4e4e4; border-right: 1px solid #ddd; margin-right: 2px; }
.tree-wrap { flex: 1; min-height: 0; display: flex; }
.tree { width: 102px; flex: none; overflow: hidden; background: #fbfbfb; }
.tree-root { height: 18px; line-height: 22px; margin-left: -3px; white-space: nowrap; letter-spacing: .5px; color: #333; }
.tree-list { list-style: none; margin: 532px 0 0 -16px; padding: 0; }
.tree-list li { height: 22px; line-height: 22px; white-space: nowrap; }
.vscroll { width: 15px; position: relative; background: #f0f0f0; display: flex; flex-direction: column; align-items: center; }
.v-up { margin-top: 6px; border: 4px solid transparent; border-bottom: 4px solid #555; border-top: 0; }
.v-thumb { position: absolute; left: 0; top: 19px; width: 13px; height: 470px; background: linear-gradient(90deg, #e6e6e6, #cfcfcf); border: 1px solid #c0c0c0; }
.v-thumb::after { content: ""; position: absolute; left: 3px; top: 231px; width: 7px; height: 8px; background: repeating-linear-gradient(#666 0 1px, transparent 1px 2.500px); }
.v-down { margin-top: auto; margin-bottom: 6px; border: 4px solid transparent; border-top: 4px solid #555; border-bottom: 0; }
.hscroll { height: 16px; flex: none; display: flex; align-items: center; background: #f0f0f0; }
.h-thumb { width: 48px; height: 14px; background: linear-gradient(#e6e6e6, #c4c4c4); border-right: 1px solid #aaa; }
.h-right { margin-left: 42px; border: 4px solid transparent; border-left: 4px solid #444; border-right: 0; }
.splitter { width: 8px; height: 39px; margin-top: 334px; padding-top: 6px; background: #fff; display: flex; align-items: center; justify-content: center; flex: none; }
.split-dot { width: 6px; height: 6px; background: #c8c8c8; border: 1px solid #999; border-radius: 50%; }
```
